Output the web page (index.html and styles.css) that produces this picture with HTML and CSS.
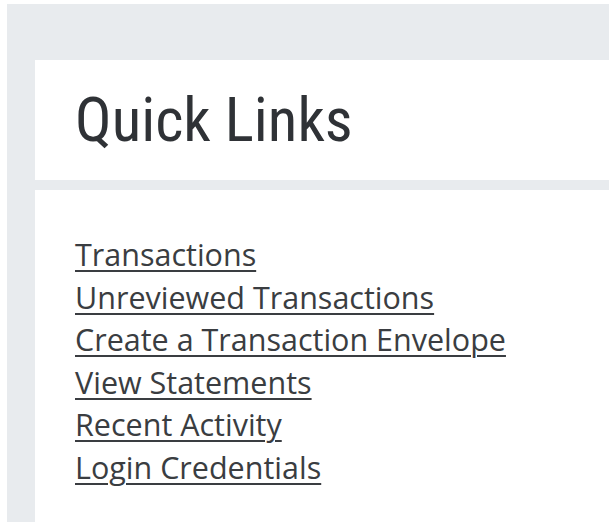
FILE: index.html
```html
<!DOCTYPE html>
<html lang="en">
<head>
<meta charset="utf-8">
<title>Quick Links</title>
<link rel="stylesheet" href="styles.css">
</head>
<body>
  <main class="dashboard">
    <section class="panel">
      <header class="panel-head">
        <h2 class="panel-title">Quick Links</h2>
      </header>
      <div class="panel-body">
        <ul class="link-list">
          <li><a href="#">Transactions</a></li>
          <li><a href="#">Unreviewed Transactions</a></li>
          <li><a href="#">Create a Transaction Envelope</a></li>
          <li><a href="#">View Statements</a></li>
          <li><a href="#">Recent Activity</a></li>
          <li><a href="#">Login Credentials</a></li>
        </ul>
      </div>
    </section>
  </main>
</body>
</html>
```

FILE: styles.css
```css
html, body {
  margin: 0;
  padding: 0;
  background: #ffffff;
  height: 100%;
  overflow: hidden;
}

.dashboard {
  margin: 4px 0 0 7px;
  padding: 56px 0 0 28px;
  background: #e8ebee;
  height: calc(100vh - 4px);
  box-sizing: border-box;
  display: flex;
  flex-direction: column;
}

.panel {
  flex: 1;
  display: flex;
  flex-direction: column;
  gap: 10px;
}

.panel-head {
  background: #ffffff;
  height: 120px;
  flex: none;
  padding: 0 0 0 40px;
  display: flex;
  align-items: center;
}

.panel-title {
  margin: 0;
  font-family: "Roboto Condensed", Roboto, sans-serif;
  font-stretch: condensed;
  font-weight: 400;
  font-size: 61px;
  line-height: 1;
  color: #2f3236;
}

.panel-body {
  flex: 1;
  background: #ffffff;
  padding: 43px 0 0 40px;
}

.link-list {
  list-style: none;
  margin: 0;
  padding: 0;
  font-family: "Open Sans", sans-serif;
  font-size: 30.5px;
  line-height: 42.6px;
}

.link-list a {
  color: #3a3d41;
  text-decoration: underline;
  text-underline-offset: 4px;
  text-decoration-thickness: 2px;
}
```
